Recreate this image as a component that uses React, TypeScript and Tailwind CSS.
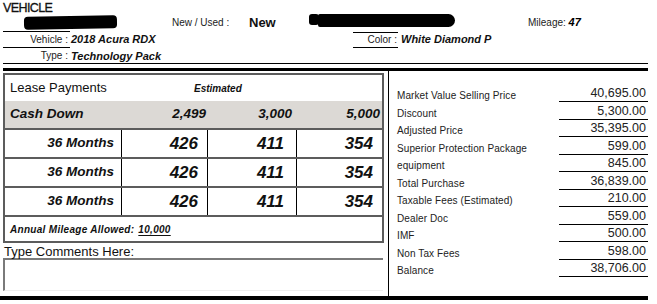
const rows = [
  { label: "Market Value Selling Price", value: "40,695.00" },
  { label: "Discount", value: "5,300.00" },
  { label: "Adjusted Price", value: "35,395.00" },
  { label: "Superior Protection Package", value: "599.00" },
  { label: "equipment", value: "845.00" },
  { label: "Total Purchase", value: "36,839.00" },
  { label: "Taxable Fees (Estimated)", value: "210.00" },
  { label: "Dealer Doc", value: "559.00" },
  { label: "IMF", value: "500.00" },
  { label: "Non Tax Fees", value: "598.00" },
  { label: "Balance", value: "38,706.00" },
];

const leaseRows = [
  ["426", "411", "354"],
  ["426", "411", "354"],
  ["426", "411", "354"],
];

export default function App() {
  return (
    <div className="relative w-[657px] h-[304px] overflow-hidden bg-white text-[#111] font-['Liberation_Sans',Arial,sans-serif]">
      {/* header */}
      <div className="relative ml-[3px] w-[645px] h-[64px] border-b border-black">
        <div className="h-[15px] pt-[1px] text-[12.5px] leading-[14px] tracking-[-0.6px] [-webkit-text-stroke:0.3px_#111]">
          VEHICLE
        </div>
        <div className="flex items-end h-[17px]">
          <div className="w-[67px] h-full border-b border-black" />
          <div className="ml-[102px] w-[77px] text-[10px] leading-[12px] pb-[3px] text-[#222]">New / Used :</div>
          <div className="w-[279px] text-[13px] font-bold leading-[15px] pb-[2px]">New</div>
          <div className="text-[10px] leading-[12px] pb-[3px] text-[#222]">
            Mileage: <span className="text-[11px] font-bold italic text-black">47</span>
          </div>
        </div>
        <div className="flex h-[16px]">
          <div className="w-[67px] border-b border-black text-right pr-[2px] text-[10px] leading-[15px] text-[#222]">Vehicle :</div>
          <div className="w-[283px] pl-[1px] text-[11px] font-bold italic leading-[15px]">2018 Acura RDX</div>
          <div className="w-[45px] border-y border-black text-right pr-[1px] text-[10px] leading-[14px] text-[#222]">Color :</div>
          <div className="pl-[3px] text-[11px] font-bold italic leading-[15px]">White Diamond P</div>
        </div>
        <div className="flex h-[15px]">
          <div className="w-[67px] text-right pr-[2px] text-[10px] leading-[16px] text-[#222]">Type :</div>
          <div className="pl-[1px] text-[11px] font-bold italic leading-[16px]">Technology Pack</div>
        </div>
        {/* redactions */}
        <div className="absolute left-[21px] top-[16px] w-[93px] h-[13px] bg-black rounded-[4px] rotate-[-1deg]" />
        <div className="absolute left-[306px] top-[14px] w-[10px] h-[11px] bg-black rounded-[3px]" />
        <div className="absolute left-[315px] top-[14px] w-[137px] h-[13px] bg-black rounded-l-[3px] rounded-r-[10px]" />
      </div>
      <div className="ml-[3px] mt-[4px] w-[645px] h-[3px] bg-black" />

      {/* body */}
      <div className="flex h-[225px]">
        <div className="w-[389px] border-r border-black pt-[2px] pl-[3px]">
          <div className="w-[381px] border-2 border-[#5c5c5c]">
            <div className="flex items-center h-[26px]">
              <div className="w-[189px] pl-[5px] text-[13px]">Lease Payments</div>
              <div className="text-[10px] font-bold italic">Estimated</div>
            </div>
            <div className="grid grid-cols-[117px_86px_89px_85px] items-center h-[27px] bg-[#dcd9d5] text-[13.5px] font-bold italic">
              <div className="pl-[5px]">Cash Down</div>
              <div className="text-right pr-[2px]">2,499</div>
              <div className="text-right pr-[5px]">3,000</div>
              <div className="text-right pr-[2px]">5,000</div>
            </div>
            {leaseRows.map((r, i) => (
              <div key={i} className="grid grid-cols-[117px_86px_89px_85px] h-[29px] border-t-2 border-[#5c5c5c] font-bold italic">
                <div className="flex items-center justify-end pr-[7px] border-r border-black text-[13.5px]">36 Months</div>
                <div className="flex items-center justify-end pr-[9px] border-r border-black text-[17px]">{r[0]}</div>
                <div className="flex items-center justify-end pr-[12px] border-r border-black text-[17px]">{r[1]}</div>
                <div className="flex items-center justify-end pr-[9px] text-[17px]">{r[2]}</div>
              </div>
            ))}
            <div className="flex items-center h-[26px] border-t-2 border-[#5c5c5c] pl-[5px] text-[10px] font-bold italic tracking-[0.3px]">
              Annual Mileage Allowed:
              <span className="ml-[4px] underline underline-offset-2">10,000</span>
            </div>
          </div>
          <div className="h-[15px] text-[13px] leading-[17px] pl-[1px]">Type Comments Here:</div>
          <div className="w-[380px] h-[33px] border-t-2 border-l-2 border-[#7a7a7a] border-b border-b-[#eeeeee]" />
        </div>
        <div className="flex-1 pt-[13.5px] pr-[9px]">
          {rows.map((r) => (
            <div key={r.label} className="flex h-[17.5px]">
              <div className="flex-1 pl-[8px] flex items-end text-[10px] leading-[12px] text-[#222] tracking-[0.1px]">{r.label}</div>
              <div className="w-[89px] flex items-end justify-end border-b border-black pr-[2px] pb-[1px] text-[12.5px] leading-[14px] text-[#222]">
                {r.value}
              </div>
            </div>
          ))}
        </div>
      </div>
      <div className="w-[648px] h-[4px] bg-black" />
    </div>
  );
}
